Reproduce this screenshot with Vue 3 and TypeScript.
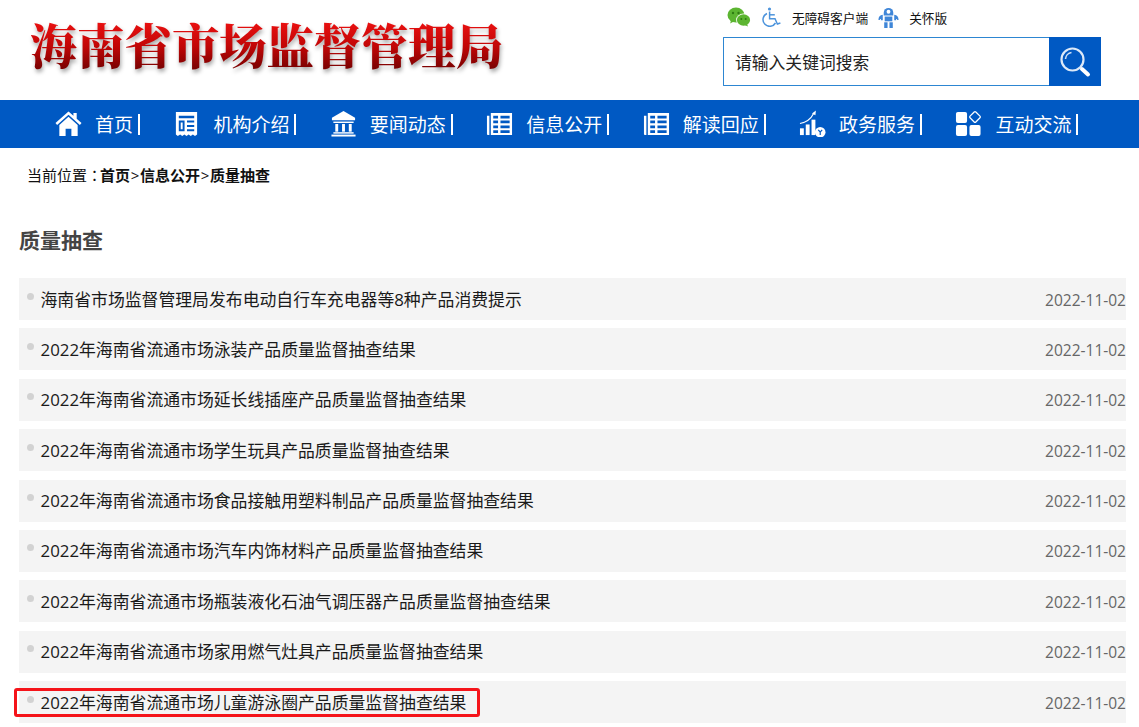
<script setup lang="ts">
interface NavItem { label: string; icon: string }
const nav: NavItem[] = [
  { label: '首页', icon: 'home' },
  { label: '机构介绍', icon: 'doc' },
  { label: '要闻动态', icon: 'bank' },
  { label: '信息公开', icon: 'table' },
  { label: '解读回应', icon: 'table' },
  { label: '政务服务', icon: 'chart' },
  { label: '互动交流', icon: 'apps' },
]
const prefix = '2022年海南省流通市场'
const suffix = '产品质量监督抽查结果'
const rows: { title: string; marked?: boolean }[] = [
  { title: '海南省市场监督管理局发布电动自行车充电器等8种产品消费提示' },
  { title: prefix + '泳装' + suffix },
  { title: prefix + '延长线插座' + suffix },
  { title: prefix + '学生玩具' + suffix },
  { title: prefix + '食品接触用塑料制品' + suffix },
  { title: prefix + '汽车内饰材料' + suffix },
  { title: prefix + '瓶装液化石油气调压器' + suffix },
  { title: prefix + '家用燃气灶具' + suffix },
  { title: prefix + '儿童游泳圈' + suffix, marked: true },
]
const crumbs = ['首页', '信息公开', '质量抽查']
</script>

<template>
  <div class="page">
    <header class="top">
      <div class="logo">海南省市场监督管理局</div>
      <div class="tools">
        <div class="links">
          <svg class="i-wx" viewBox="0 0 24 20" width="24" height="20">
            <ellipse cx="9" cy="8" rx="8.500" ry="7.500" fill="#5cb531" />
            <path d="M4 13l-.8 3.600 4-2.400z" fill="#5cb531" />
            <ellipse cx="16.500" cy="13" rx="7.400" ry="6.400" fill="#fff" />
            <ellipse cx="16.500" cy="13" rx="6.600" ry="5.700" fill="#5cb531" />
            <path d="M20 17l1 2.600-3.600-1.600z" fill="#5cb531" />
            <circle cx="6" cy="6" r="1.200" fill="#2f7d12" /><circle cx="11.500" cy="6" r="1.200" fill="#2f7d12" />
            <circle cx="14.300" cy="12" r="1" fill="#2f7d12" /><circle cx="18.700" cy="12" r="1" fill="#2f7d12" />
          </svg>
          <svg class="i-wc" viewBox="0 0 20 20" width="20" height="20" fill="none" stroke="#4d94dc" stroke-width="1.500">
            <circle cx="7.500" cy="2" r="1.600" fill="#4d94dc" stroke="none" />
            <path d="M5 6.500A6.700 6.700 0 1 0 13.500 16" />
            <path d="M7.600 4.500v7.300h5.400l2.400 5.200 3-1" />
            <path d="M7.800 7.800h5" />
          </svg>
          <span class="t1">无障碍客户端</span>
          <svg class="i-rb" viewBox="0 0 22 22" width="21" height="21" fill="#3f86d8">
            <path d="M6 6a5 5 0 0 1 10 0v3H6z" />
            <rect x="7" y="10" width="8" height="5" />
            <path d="M.5 13c0-3 1.500-4.500 4.500-5v6H3v-1.500H2v1H.5zM21.500 13c0-3-1.500-4.500-4.500-5v6h2v-1.500h1v1h1.500z" />
            <rect x="6.500" y="16" width="3.500" height="6" /><rect x="12" y="16" width="3.500" height="6" />
            <circle cx="11" cy="5" r="2" fill="#fff" />
          </svg>
          <span class="t2">关怀版</span>
        </div>
        <div class="search">
          <div class="field">请输入关键词搜索</div>
          <div class="btn">
            <svg viewBox="0 0 32 32" width="32" height="32" fill="none" stroke="#fff">
              <circle cx="13.500" cy="13.500" r="11" stroke-width="2.200" stroke="#dce9f8" />
              <path d="M6.500 13a7 7 0 0 1 6-6.500" stroke-width="1.600" stroke="#cfe0f5" />
              <path d="M23 23l6 5.500" stroke-width="4" stroke-linecap="round" />
            </svg>
          </div>
        </div>
      </div>
    </header>

    <nav class="nav">
      <div v-for="item in nav" :key="item.label" class="nav-item">
        <svg class="nav-icon" viewBox="0 0 28 28" width="27" height="27" fill="#fff">
          <template v-if="item.icon === 'home'">
            <path d="M14 1.500L.5 13.500l1.700 2L14 5l11.800 10.500 1.700-2L22.500 9V3h-3.400v3z" />
            <path d="M14 7L4.500 15.500V27H11v-7.500h6V27h6.500V15.500z" />
          </template>
          <template v-else-if="item.icon === 'doc'">
            <path fill-rule="evenodd" d="M3 2h22v23.500l-2.200 1.500-2.200-1.500-2.200 1.500-2.200-1.500-2.200 1.500-2.200-1.500-2.200 1.500-2.200-1.500L5 27l-2-1.500zM6 6v2.500h16V6zM6 11v11h6V11zM14.500 11v2h7.500v-2zM14.500 15.500v2h7.500v-2zM14.500 20v2h7.500v-2zM8 13h2v7H8z" />
          </template>
          <template v-else-if="item.icon === 'bank'">
            <path d="M14 1L2 8v2.500h24V8z" />
            <rect x="3.500" y="12" width="21" height="1.500" />
            <rect x="5.500" y="14.500" width="3" height="8" /><rect x="12.500" y="14.500" width="3" height="8" /><rect x="19.500" y="14.500" width="3" height="8" />
            <rect x="3.500" y="23" width="21" height="1.500" /><rect x="1.500" y="25.500" width="25" height="2" />
          </template>
          <template v-else-if="item.icon === 'table'">
            <path d="M1 6h2.500v20H2a1 1 0 0 1-1-1z" />
            <path fill-rule="evenodd" d="M5 3h22v23H5zM7.500 6v2.800h5V6zM15 6v2.800h9.500V6zM7.500 11v2.800h5V11zM15 11v2.800h9.500V11zM7.500 16v2.800h5V16zM15 16v2.800h9.500V16zM7.500 21v2.800h5V21zM15 21v2.800h9.500V21z" />
          </template>
          <template v-else-if="item.icon === 'chart'">
            <rect x="1" y="19" width="4" height="7" /><rect x="7" y="15" width="4" height="11" /><rect x="13" y="10" width="4" height="16" />
            <path d="M1 14c6-1 11-4 14-10" fill="none" stroke="#fff" stroke-width="1.200" />
            <path d="M17.500.5l-.5 5-3.500-2z" />
            <circle cx="22" cy="23" r="5.500" /><path d="M20 20.500l2 2.500 2-2.500M22 23v3" fill="none" stroke="#0059c3" stroke-width="1.200" />
          </template>
          <template v-else>
            <rect x="1" y="2" width="11.500" height="11.500" rx="2" />
            <rect x="1" y="15.500" width="11.500" height="11.500" rx="2" />
            <rect x="15" y="15.500" width="11.500" height="11.500" rx="2" />
            <rect x="16.500" y="3" width="8.500" height="8.500" rx="1.200" fill="none" stroke="#fff" stroke-width="1.300" transform="rotate(45 20.750 7.250)" />
          </template>
        </svg>
        <span class="nav-label">{{ item.label }}</span>
        <i class="nav-sep"></i>
      </div>
    </nav>

    <div class="crumb">
      <span>当前位置</span><span class="colon">：</span>
      <template v-for="(c, i) in crumbs" :key="c">
        <span v-if="i > 0" class="gt">&gt;</span><b>{{ c }}</b>
      </template>
    </div>
    <h2 class="title">质量抽查</h2>

    <ul class="list">
      <li v-for="row in rows" :key="row.title" class="row">
        <i class="dot"></i>
        <span class="row-title">{{ row.title }}</span>
        <span class="date">2022-11-02</span>
        <i v-if="row.marked" class="mark"></i>
      </li>
    </ul>
  </div>
</template>

<style>
html, body { margin: 0; background: #fff; overflow: hidden; }
</style>

<style scoped>
.page {
  width: 1139px;
  height: 727px;
  overflow: hidden;
  font-family: "Open Sans", "Noto Sans CJK SC", sans-serif;
  color: #111;
}
.top {
  height: 100px;
  display: flex;
  justify-content: space-between;
  padding: 0 38px 0 30px;
  box-sizing: border-box;
}
.logo {
  margin-top: 14px;
  height: 60px;
  font: 900 47.300px/60px "Noto Serif CJK SC", "Noto Sans CJK SC", serif;
  white-space: nowrap;
  background: linear-gradient(180deg, #e81010 15%, #c00606 55%, #7c0202 90%);
  -webkit-background-clip: text;
  background-clip: text;
  color: transparent;
  filter: drop-shadow(1px 3px 2px rgba(0, 0, 0, .35));
}
.tools { width: 378px; }
.links {
  height: 37px;
  display: flex;
  align-items: center;
  padding: 0 0 3px 4px;
  font-size: 12.700px;
  box-sizing: border-box;
}
.i-wc { margin-left: 11px; }
.t1 { margin-left: 10px; }
.i-rb { margin-left: 10px; }
.t2 { margin-left: 10px; }
.search {
  height: 49px;
  display: flex;
  border: 1px solid #2d86d2;
  box-sizing: border-box;
  border-right: 0;
  border-radius: 1px;
}
.field {
  flex: 1;
  padding-left: 11px;
  font-size: 16.800px;
  line-height: 49px;
  color: #222;
}
.btn {
  width: 52px;
  margin: -1px 0;
  background: #0059c3;
  display: flex;
  align-items: center;
  justify-content: center;
}
.nav {
  height: 48px;
  background: #0059c3;
  display: flex;
  gap: 33.400px;
  padding-left: 55px;
}
.nav-item {
  display: flex;
  align-items: center;
  color: #fff;
}
.nav-icon { flex: none; margin-top: -2px; }
.nav-label {
  font-size: 19px;
  margin-left: 13px;
  white-space: nowrap;
}
.nav-sep {
  width: 2px;
  height: 21px;
  margin-left: 5px;
  background: #fff;
}
.crumb {
  margin: 17px 0 0 27px;
  font-size: 15px;
  line-height: 20px;
  color: #111;
  display: flex;
}
.crumb b { font-weight: 700; }
.colon { width: 13px; font-family: "Noto Sans CJK TC", sans-serif; }
.gt { width: 10px; text-align: center; }
.title {
  margin: 41px 0 0 19px;
  font-size: 21px;
  line-height: 28px;
  font-weight: 700;
  color: #444;
}
.list {
  list-style: none;
  margin: 24px 0 0 19px;
  padding: 0;
  width: 1107px;
  display: flex;
  flex-direction: column;
  gap: 8.400px;
}
.row {
  position: relative;
  height: 42px;
  flex: none;
  background: #f4f4f4;
  display: flex;
  align-items: center;
}
.dot {
  width: 7px;
  height: 7px;
  border-radius: 50%;
  background: #d2d2d2;
  margin: -6px 0 0 8px;
  flex: none;
}
.row-title {
  flex: 1;
  margin: -2px 0 0 6.500px;
  font-size: 16.850px;
  color: #1a1a1a;
  white-space: nowrap;
}
.date {
  font-size: 15.500px;
  color: #666;
  margin-top: 1px;
}
.mark {
  position: absolute;
  left: -5px;
  top: 7px;
  width: 466px;
  height: 29px;
  border: 3px solid #f5141a;
  border-radius: 3px;
  box-sizing: border-box;
}
</style>
